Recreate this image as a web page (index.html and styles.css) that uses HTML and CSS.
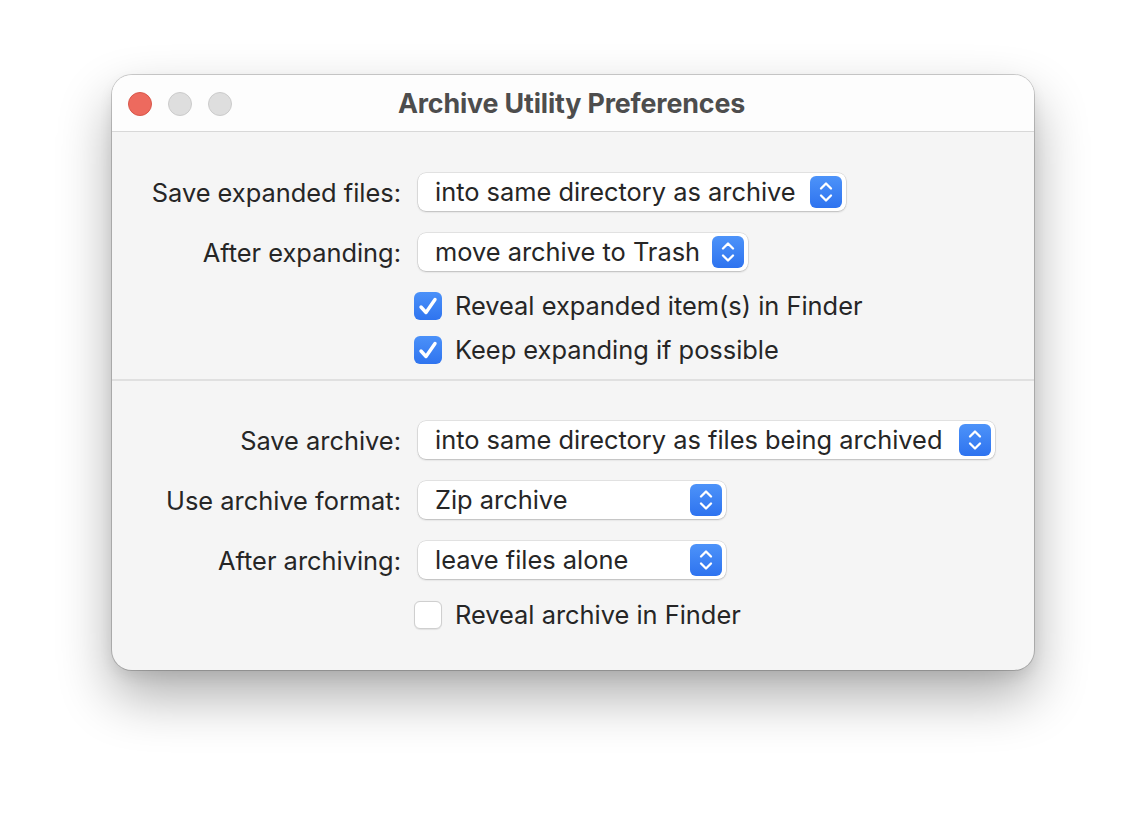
FILE: index.html
```html
<!DOCTYPE html>
<html lang="en">
<head>
<meta charset="utf-8">
<title>Archive Utility Preferences</title>
<link rel="stylesheet" href="styles.css">
</head>
<body>
<div class="window">
  <div class="titlebar">
    <div class="lights">
      <span class="light red"></span>
      <span class="light gray"></span>
      <span class="light gray"></span>
    </div>
    <div class="title">Archive Utility Preferences</div>
  </div>
  <div class="section first">
    <div class="row">
      <label class="label">Save expanded files:</label>
      <div class="popup w1"><span class="ptext">into same directory as archive</span><span class="stepper"><svg viewBox="0 0 32 32" width="32" height="32"><path d="M11 12.5 L16 7.5 L21 12.5 M11 19.5 L16 24.5 L21 19.5" fill="none" stroke="#fff" stroke-width="2.3" stroke-linecap="round" stroke-linejoin="round"/></svg></span></div>
    </div>
    <div class="row">
      <label class="label">After expanding:</label>
      <div class="popup w2"><span class="ptext">move archive to Trash</span><span class="stepper"><svg viewBox="0 0 32 32" width="32" height="32"><path d="M11 12.5 L16 7.5 L21 12.5 M11 19.5 L16 24.5 L21 19.5" fill="none" stroke="#fff" stroke-width="2.3" stroke-linecap="round" stroke-linejoin="round"/></svg></span></div>
    </div>
    <div class="row crow c1">
      <span></span>
      <div class="check"><span class="box on"><svg viewBox="0 0 28 28" width="28" height="28"><path d="M7 15 L12 20.5 L21 7.5" fill="none" stroke="#fff" stroke-width="3.4" stroke-linecap="round" stroke-linejoin="round"/></svg></span><span class="ctext">Reveal expanded item(s) in Finder</span></div>
    </div>
    <div class="row crow c2">
      <span></span>
      <div class="check"><span class="box on"><svg viewBox="0 0 28 28" width="28" height="28"><path d="M7 15 L12 20.5 L21 7.5" fill="none" stroke="#fff" stroke-width="3.4" stroke-linecap="round" stroke-linejoin="round"/></svg></span><span class="ctext">Keep expanding if possible</span></div>
    </div>
  </div>
  <div class="divider"></div>
  <div class="section second">
    <div class="row">
      <label class="label">Save archive:</label>
      <div class="popup w3"><span class="ptext">into same directory as files being archived</span><span class="stepper"><svg viewBox="0 0 32 32" width="32" height="32"><path d="M11 12.5 L16 7.5 L21 12.5 M11 19.5 L16 24.5 L21 19.5" fill="none" stroke="#fff" stroke-width="2.3" stroke-linecap="round" stroke-linejoin="round"/></svg></span></div>
    </div>
    <div class="row">
      <label class="label">Use archive format:</label>
      <div class="popup w4"><span class="ptext">Zip archive</span><span class="stepper"><svg viewBox="0 0 32 32" width="32" height="32"><path d="M11 12.5 L16 7.5 L21 12.5 M11 19.5 L16 24.5 L21 19.5" fill="none" stroke="#fff" stroke-width="2.3" stroke-linecap="round" stroke-linejoin="round"/></svg></span></div>
    </div>
    <div class="row">
      <label class="label">After archiving:</label>
      <div class="popup w4"><span class="ptext">leave files alone</span><span class="stepper"><svg viewBox="0 0 32 32" width="32" height="32"><path d="M11 12.5 L16 7.5 L21 12.5 M11 19.5 L16 24.5 L21 19.5" fill="none" stroke="#fff" stroke-width="2.3" stroke-linecap="round" stroke-linejoin="round"/></svg></span></div>
    </div>
    <div class="row crow c3">
      <span></span>
      <div class="check"><span class="box off"></span><span class="ctext">Reveal archive in Finder</span></div>
    </div>
  </div>
</div>
</body>
</html>
```
FILE: styles.css
```css
html, body {
  margin: 0;
  padding: 0;
  background: #ffffff;
  height: 100%;
}
body {
  box-sizing: border-box;
  padding: 75px 0 0 112px;
  font-family: "Inter", "Liberation Sans", sans-serif;
  color: #262626;
}
.window {
  width: 922px;
  height: 595px;
  box-sizing: border-box;
  background: #f5f5f5;
  border-radius: 20px;
  overflow: hidden;
  box-shadow: 0 0 0 1px rgba(0,0,0,0.18), 0 26px 54px rgba(0,0,0,0.32), 0 6px 14px rgba(0,0,0,0.08);
}
.titlebar {
  height: 57px;
  box-sizing: border-box;
  background: #fdfdfd;
  border-bottom: 1px solid #d8d8d8;
  display: flex;
  align-items: center;
  position: relative;
}
.lights {
  display: flex;
  gap: 16px;
  padding-left: 16px;
  position: absolute;
  left: 0;
  top: 17px;
}
.light {
  width: 24px;
  height: 24px;
  border-radius: 50%;
  box-sizing: border-box;
}
.light.red {
  background: #ed6a5e;
  border: 1px solid #d8574a;
}
.light.gray {
  background: #dedede;
  border: 1px solid #cbcbcb;
}
.title {
  flex: 1;
  text-align: center;
  font-weight: 700;
  font-size: 26.8px;
  color: #4d4d4d;
  letter-spacing: -0.15px;
  padding-right: 3px;
}
.section.first {
  padding: 41px 0 0;
  height: 247px;
  box-sizing: border-box;
}
.section.second {
  padding: 40px 0 0;
}
.divider {
  height: 2px;
  background: #e0e0e0;
}
.row {
  display: grid;
  grid-template-columns: 289px auto;
  column-gap: 17px;
  align-items: center;
  height: 38px;
  margin-bottom: 22px;
}
.row.crow {
  height: 28px;
}
.row.crow.c1 {
  margin-top: -3px;
  margin-bottom: 16px;
}
.row.crow.c3 {
  margin-top: -2px;
}
.label {
  text-align: right;
  font-size: 25.4px;
  color: #262626;
  white-space: nowrap;
}
.popup {
  height: 38px;
  box-sizing: border-box;
  background: #ffffff;
  border-radius: 8px;
  box-shadow: 0 0 0 0.5px rgba(0,0,0,0.14), 0 1px 2px rgba(0,0,0,0.18);
  display: flex;
  align-items: center;
  justify-content: space-between;
  padding: 0 4px 0 17px;
  font-size: 25.4px;
  color: #262626;
  white-space: nowrap;
}
.ptext { padding-bottom: 1px; }
.w1 { width: 428px; }
.w2 { width: 330px; }
.w3 { width: 577px; }
.w4 { width: 308px; }
.stepper {
  width: 32px;
  height: 32px;
  border-radius: 6px;
  background: linear-gradient(#4d93f9, #2e73ef);
  display: flex;
  align-items: center;
  justify-content: center;
}
.stepper svg { display: block; }
.check {
  display: flex;
  align-items: center;
  margin-left: -4px;
  gap: 13px;
  font-size: 25.4px;
  color: #262626;
  white-space: nowrap;
}
.box {
  width: 28px;
  height: 28px;
  box-sizing: border-box;
  border-radius: 6px;
  flex: none;
}
.box svg { display: block; }
.box.on {
  background: linear-gradient(#4b91f9, #2f74ef);
}
.box.off {
  background: #ffffff;
  border: 1px solid #cfcfcf;
  box-shadow: 0 0.5px 1px rgba(0,0,0,0.08);
}
```
